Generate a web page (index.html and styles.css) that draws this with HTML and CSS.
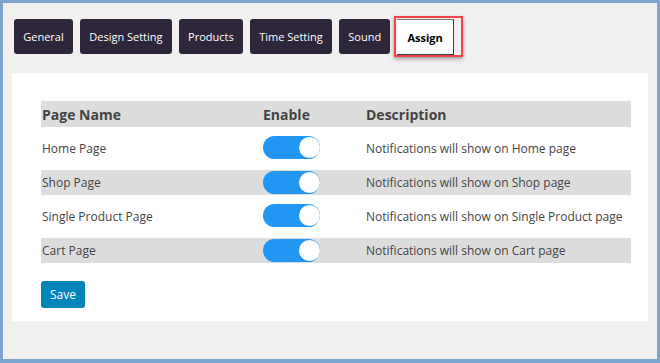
FILE: index.html
```html
<!DOCTYPE html>
<html lang="en">
<head>
	<meta charset="UTF-8">
	<title>Assign</title>
	<link rel="stylesheet" href="styles.css">
</head>
<body>
	<div class="frame">
		<!-- tabs -->
		<div class="tabs">
			<button class="tab">General</button>
			<button class="tab">Design Setting</button>
			<button class="tab">Products</button>
			<button class="tab">Time Setting</button>
			<button class="tab">Sound</button>
			<div class="tab-active-wrap"><button class="tab active">Assign</button></div>
		</div>

		<div class="panel">
			<div class="assign-table">
				<div class="row head">
					<div class="c-name">Page Name</div>
					<div class="c-enable">Enable</div>
					<div class="c-desc">Description</div>
				</div>
				<div class="row tall">
					<div class="c-name">Home Page</div>
					<div class="c-enable"><span class="switch"><span class="knob"></span></span></div>
					<div class="c-desc">Notifications will show on Home page</div>
				</div>
				<div class="row short">
					<div class="c-name">Shop Page</div>
					<div class="c-enable"><span class="switch"><span class="knob"></span></span></div>
					<div class="c-desc">Notifications will show on Shop page</div>
				</div>
				<div class="row tall">
					<div class="c-name">Single Product Page</div>
					<div class="c-enable"><span class="switch"><span class="knob"></span></span></div>
					<div class="c-desc">Notifications will show on Single Product page</div>
				</div>
				<div class="row short">
					<div class="c-name">Cart Page</div>
					<div class="c-enable"><span class="switch"><span class="knob"></span></span></div>
					<div class="c-desc">Notifications will show on Cart page</div>
				</div>
			</div>
			<button class="save">Save</button>
		</div>
	</div>
</body>
</html>
```

FILE: styles.css
```css
html, body { margin: 0; padding: 0; }
body { font-family: "Open Sans", "Noto Sans", sans-serif; color: #444; }
.frame { width: 660px; height: 363px; box-sizing: border-box; border: 3px solid #7ba4cf; border-bottom-width: 4px; background-color: #f0f0f0; padding: 16px 9px 0 9px; }

.tabs { display: flex; align-items: center; gap: 7px; margin-left: 2px; height: 35px; }
.tab {
	height: 35px;
	padding: 0 9.25px;
	border: none;
	border-radius: 3px;
	background-color: #2e263a;
	color: #fff;
	font-family: "Open Sans", sans-serif;
	font-size: 11px;
	cursor: pointer;
}
.tab-active-wrap { display: flex; margin-left: -3px; height: 41px; box-sizing: border-box; padding: 1px 7px 3px 1px; border: 2px solid #f2414b; box-shadow: 0 2px 4px rgba(0,0,0,0.35); }
.tab.active { height: 36px; background-color: #fff; color: #000; font-weight: 700; border-radius: 0; padding: 0 10px; border-top: 1px solid #777; border-right: 1px solid #3a3a3a; border-bottom: 1px solid #3a3a3a; }

.panel { margin-top: 19px; height: 248px; box-sizing: border-box; background-color: #fff; padding: 28px 17px 0 29px; }

.assign-table { width: 590px; font-size: 12px; }
.row { display: flex; align-items: center; }
.row.head { height: 26px; background-color: #dddddd; font-weight: 700; font-size: 14px; color: #444; }
.row.tall { height: 43px; }
.row.short { height: 25px; background-color: #dddddd; }
.c-name { width: 221px; padding-left: 1px; }
.c-enable { width: 103px; }
.c-desc { flex: 1; }

.switch { position: relative; display: block; width: 57px; height: 23px; border-radius: 12px; background-color: #2196f3; }
.knob { position: absolute; right: 0; top: 1px; width: 21px; height: 21px; border-radius: 50%; background-color: #fff; }
.row.tall .switch { margin-top: -3px; }

.save { margin-top: 18px; height: 27px; width: 44px; padding: 0; border: none; border-radius: 3px; background-color: #0085ba; color: #fff; font-family: "Open Sans", sans-serif; font-size: 12px; cursor: pointer; }
```
